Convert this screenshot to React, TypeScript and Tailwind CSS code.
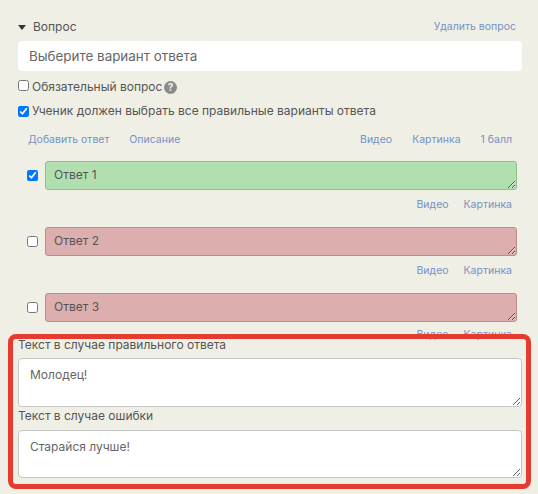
function Link({ children }: { children: React.ReactNode }) {
  return <a className="text-[10.5px] leading-[14px] text-[#7492c4]">{children}</a>;
}
function Media() {
  return (
    <div className="flex justify-end gap-[15px] pr-[5px] h-[14px]">
      <Link>Видео</Link>
      <Link>Картинка</Link>
    </div>
  );
}
function Answer({ text, ok }: { text: string; ok?: boolean }) {
  return (
    <div className="flex items-center pl-[27px]">
      <input type="checkbox" defaultChecked={ok} className="m-0 w-[11px] h-[11px] shrink-0" />
      <textarea
        defaultValue={text}
        className={
          ok
            ? "ml-[7px] flex-1 h-[29px] rounded-[3px] border border-[#8fbf8a] bg-[#b2dfb0] px-[8px] py-[4px] text-[12px] leading-[18px] text-[#555]"
            : "ml-[7px] flex-1 h-[29px] rounded-[3px] border border-[#bf8a8a] bg-[#dcaeae] px-[8px] py-[4px] text-[12px] leading-[18px] text-[#555]"
        }
      />
    </div>
  );
}
export default function App() {
  return (
    <div className="relative w-[538px] h-[494px] overflow-hidden bg-[#f0efe6] text-[#555] font-['Inter','Liberation_Sans',sans-serif]">
      <div className="pl-[18px] pr-[16px] pt-[19px]">
        <div className="flex items-center justify-between h-[15px] pr-[6px]">
          <div className="flex items-center gap-[7px] text-[12px]">
            <svg width="8" height="5" viewBox="0 0 8 5" className="mt-[1px]"><path d="M0 0h8L4 5z" fill="#333" /></svg>
            <span>Вопрос</span>
          </div>
          <Link>Удалить вопрос</Link>
        </div>
        <input
          defaultValue="Выберите вариант ответа"
          className="mt-[7px] block w-full h-[30px] rounded-[4px] bg-white px-[11px] text-[13.4px] text-[#666] outline-none"
        />
        <label className="mt-[8px] flex items-center h-[16px] text-[12px]">
          <input type="checkbox" className="m-0 -mt-[3px] w-[11px] h-[11px]" />
          <span className="ml-[3px]">Обязательный вопрос</span>
          <svg width="13" height="13" viewBox="0 0 13 13" className="ml-[2px]">
            <circle cx="6.5" cy="6.5" r="6.5" fill="#8a8a8a" />
            <text x="6.5" y="10" textAnchor="middle" fontSize="10" fontWeight="700" fill="#f0efe6">?</text>
          </svg>
        </label>
        <label className="mt-[8px] flex items-center h-[16px] text-[12px]">
          <input type="checkbox" defaultChecked className="m-0 w-[11px] h-[11px]" />
          <span className="ml-[3px]">Ученик должен выбрать все правильные варианты ответа</span>
        </label>
      </div>
      <div className="mt-[14px] flex justify-between pl-[28px] pr-[26px] h-[14px]">
        <div className="flex gap-[20px]">
          <Link>Добавить ответ</Link>
          <Link>Описание</Link>
        </div>
        <div className="flex gap-[20px]">
          <Link>Видео</Link>
          <Link>Картинка</Link>
          <Link>1 балл</Link>
        </div>
      </div>
      <div className="pr-[21px] mt-[14px] flex flex-col">
        <Answer text="Ответ 1" ok />
        <div className="mt-[8px] mb-[15px]"><Media /></div>
        <Answer text="Ответ 2" />
        <div className="mt-[8px] mb-[15px]"><Media /></div>
        <Answer text="Ответ 3" />
        <div className="mt-[6px]"><Media /></div>
      </div>
      <div className="px-[16px] pl-[18px] -mt-[5px]">
        <div className="text-[12px] leading-[15px] h-[15px]">Текст в случае правильного ответа</div>
        <textarea
          defaultValue="Молодец!"
          className="mt-[6px] block w-full h-[49px] rounded-[4px] border border-[#c6c6c6] bg-white px-[11px] py-[7px] text-[12px] leading-[18px] text-[#666]"
        />
        <div className="mt-[1px] text-[12px] leading-[15px] h-[15px]">Текст в случае ошибки</div>
        <textarea
          defaultValue="Старайся лучше!"
          className="mt-[7px] block w-full h-[48px] rounded-[4px] border border-[#c6c6c6] bg-white px-[11px] py-[7px] text-[12px] leading-[18px] text-[#666]"
        />
      </div>
      <div className="absolute left-[8px] top-[334px] w-[523px] h-[155px] rounded-[8px] border-[5px] border-[#e63c2f] pointer-events-none" />
    </div>
  );
}
